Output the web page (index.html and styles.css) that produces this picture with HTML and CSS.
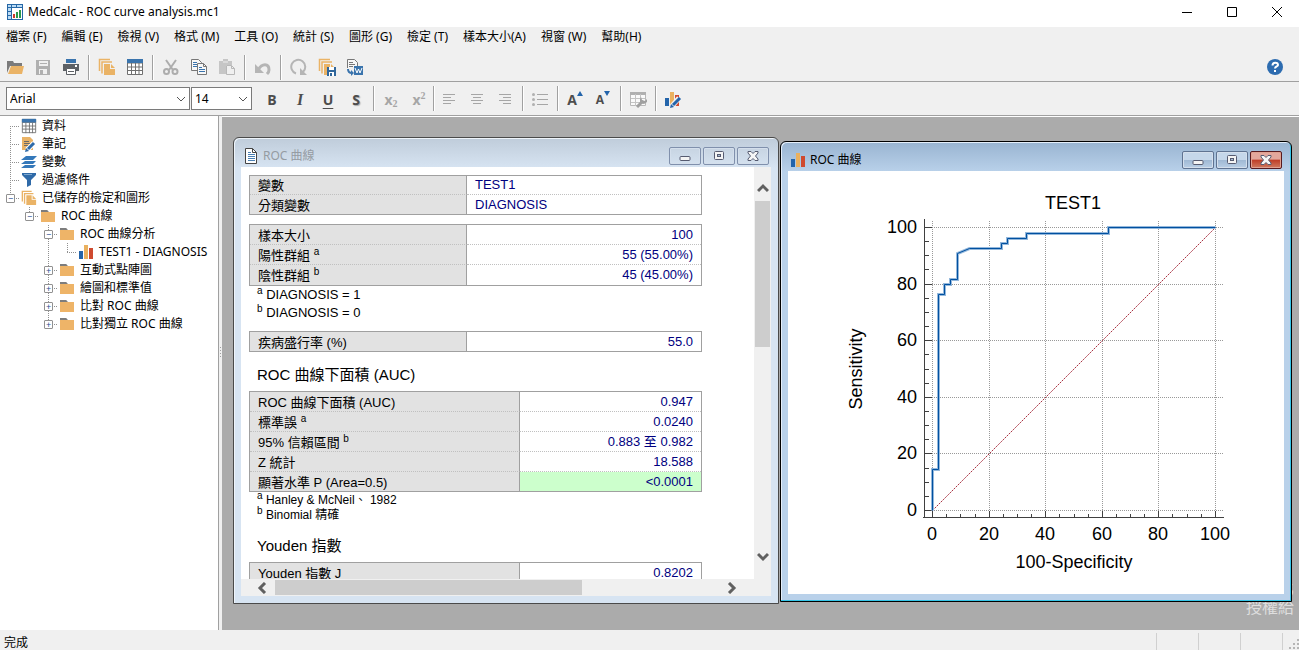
FILE: index.html
```html
<!DOCTYPE html>
<html lang="zh-Hant">

<head>
    <meta charset="UTF-8">
    <meta name="viewport" content="width=device-width, initial-scale=1.0">
    <title>MedCalc - ROC curve analysis.mc1</title>
    <link rel="stylesheet" href="styles.css">
</head>

<body>
    <!-- shared icons -->
    <svg class="symbols" aria-hidden="true">
        <symbol id="folder" viewBox="0 0 16 16">
            <path d="M1 2h6l1 2h6v2H1z" fill="#7d7d7d"/>
            <path d="M1 4h14v10H1z" fill="#eeb468"/>
            <path d="M1 2h6l2 2H1z" fill="#7d7d7d"/>
        </symbol>
        <symbol id="pages" viewBox="0 0 18 18">
            <path d="M1.5 13V1.5H12M4 15.5V4H14" fill="none" stroke="#eab366" stroke-width="1.5"/>
            <path d="M6 6h6v5h5v6H6z" fill="#eab366"/>
            <path d="M13 6l4 4h-4z" fill="#eab366"/>
        </symbol>
        <symbol id="grid" viewBox="0 0 18 18">
            <path d="M1.5 1.5h15v15h-15z" fill="#fff"/>
            <path d="M1.5 1.5h15v15h-15zM1.5 5h15M1.5 9h15M1.5 12.5h15M5.5 5v12M9.5 5v12M13 5v12" fill="none" stroke="#707070"/>
            <path d="M1 1h16v4H1z" fill="#3a74ad"/>
        </symbol>
        <symbol id="chart" viewBox="0 0 14 14">
            <path d="M0 6h4v8H0z" fill="#2364aa"/>
            <path d="M5 0h4v14H5z" fill="#eab15f"/>
            <path d="M10 3h4v11h-4z" fill="#cf4a30"/>
        </symbol>
        <symbol id="min" viewBox="0 0 12 12">
            <rect x="1" y="6.5" width="10" height="4" rx="1" fill="#f4f4f4" stroke="#565b70"/>
        </symbol>
        <symbol id="max" viewBox="0 0 12 12">
            <rect x="1.5" y="1.5" width="9" height="8" rx="1" fill="#f4f4f4" stroke="#565b70"/>
            <rect x="4.5" y="4.5" width="3" height="2" fill="#a9bdd6" stroke="#565b70"/>
        </symbol>
        <symbol id="close" viewBox="0 0 12 12">
            <path d="M1 1.5h3l2 2 2-2h3v1.5L8.500 6 11 9v1.5H8l-2-2-2 2H1V9l2.500-3L1 3z" fill="#f6f6f6" stroke="#565b70"/>
        </symbol>
    </svg>

    <header class="titlebar">
        <svg width="16" height="16" viewBox="0 0 16 16">
            <path d="M0 0h16v16H0z" fill="#2667a6"/>
            <path d="M1 1h3v2H1zM5 1h4v2H5zM10 1h5v2h-5zM1 4h3v3H1zM1 8h3v3H1zM1 12h3v3H1z" fill="#bcdcf5"/>
            <path d="M5 4h10v11H5z" fill="#fff"/>
            <path d="M6 10h2v4H6z" fill="#cf3a2b"/>
            <path d="M9 8h2v6H9z" fill="#2b9a4b"/>
            <path d="M12 6h2v8h-2z" fill="#2b9a4b"/>
        </svg>
        <h1>MedCalc - ROC curve analysis.mc1</h1>
        <div class="caption">
            <button aria-label="最小化"><svg width="12" height="12"><path d="M1 6.5h10" stroke="#000"/></svg></button>
            <button aria-label="最大化"><svg width="12" height="12"><path d="M1.5 1.5h9v9h-9z" fill="none" stroke="#000"/></svg></button>
            <button aria-label="關閉"><svg width="12" height="12"><path d="M1 1l10 10M11 1L1 11" stroke="#000"/></svg></button>
        </div>
    </header>

    <nav class="menu">
        <button>檔案 (F)</button>
        <button>編輯 (E)</button>
        <button>檢視 (V)</button>
        <button>格式 (M)</button>
        <button>工具 (O)</button>
        <button>統計 (S)</button>
        <button>圖形 (G)</button>
        <button>檢定 (T)</button>
        <button>樣本大小(A)</button>
        <button>視窗 (W)</button>
        <button>幫助(H)</button>
    </nav>

    <div class="toolbar main">
        <button aria-label="開啟">
            <svg width="18" height="18"><path d="M1 3h6l1 2h8v3H4L1 15z" fill="#7b7b7b"/><path d="M5 8h13l-2 8H2z" fill="#eab366"/></svg>
        </button>
        <button aria-label="儲存">
            <svg width="18" height="18"><path d="M2 2h14v15H2z" fill="#b0b0b0"/><path d="M5 3h9v5H5zM5 11h8v5H5z" fill="#f0f0f0"/><path d="M6 5.5h7" stroke="#b0b0b0"/><path d="M6 12h3v4H6z" fill="#b0b0b0"/></svg>
        </button>
        <button aria-label="列印">
            <svg width="18" height="18"><path d="M4 1h10v4H4z" fill="#3a74ad"/><path d="M1 6h16v7H1z" fill="#5d6166"/><path d="M4.5 10.5h9v6h-9z" fill="#fff" stroke="#5d6166"/><path d="M6 13.5h6" stroke="#5d6166"/><path d="M13 7h2v2h-2z" fill="#fff"/></svg>
        </button>
        <span class="sep"></span>
        <button aria-label="檔案"><svg width="18" height="18"><use href="#pages"/></svg></button>
        <button aria-label="資料表"><svg width="18" height="18"><use href="#grid"/></svg></button>
        <span class="sep"></span>
        <button aria-label="剪下">
            <svg width="18" height="18"><path d="M4 2l7 10M14 2L7 12" stroke="#adadad" stroke-width="2"/><circle cx="4.5" cy="13.5" r="2.5" fill="none" stroke="#adadad" stroke-width="2"/><circle cx="13" cy="13.5" r="2.5" fill="none" stroke="#adadad" stroke-width="2"/></svg>
        </button>
        <button aria-label="複製">
            <svg width="18" height="18"><path d="M1.5 1.5h7l3 3v8h-10z" fill="#f7f7f7" stroke="#777"/><path d="M3 4.5h4M3 6.5h6M3 8.5h6" stroke="#3a74ad"/><path d="M7.5 5.5h6l3 3v8h-9z" fill="#f7f7f7" stroke="#777"/><path d="M13.5 5.5v3h3" fill="none" stroke="#777"/><path d="M9 9.5h3M9 11.5h6M9 13.5h6" stroke="#3a74ad"/></svg>
        </button>
        <button aria-label="貼上">
            <svg width="18" height="18"><path d="M1 3h4V1h5v2h4v4H8v9H1z" fill="#c6c6c6"/><path d="M5 4h5" stroke="#eee"/><path d="M8.5 7.5h5l3 3v6h-8z" fill="#f0f0f0" stroke="#b8b8b8"/><path d="M13.5 7.5v3h3" fill="none" stroke="#b8b8b8"/></svg>
        </button>
        <span class="sep"></span>
        <button aria-label="復原">
            <svg width="18" height="18"><path d="M4 12c4-7 11-7 11 0 0 2-1 3-2 4" fill="none" stroke="#b5b5b5" stroke-width="3"/><path d="M1 6v9h9z" fill="#b5b5b5"/></svg>
        </button>
        <span class="sep"></span>
        <button aria-label="重算">
            <svg width="18" height="18"><path d="M6 15.5A7 7 0 1 1 13 14" fill="none" stroke="#b5b5b5" stroke-width="2"/><path d="M10 10v7h7z" fill="#b5b5b5"/></svg>
        </button>
        <button aria-label="儲存結果">
            <svg width="18" height="18"><use href="#pages"/><path d="M9 9h9v9H9z" fill="#2f669b"/><path d="M11 9h5v3h-5zM11 14h5v4h-5z" fill="#fff"/><path d="M12 15h2v3h-2z" fill="#2f669b"/></svg>
        </button>
        <button aria-label="匯出至 Word">
            <svg width="18" height="18"><path d="M1.5 10V1.5h7l3 3V8" fill="#f7f7f7" stroke="#777"/><path d="M3 4.5h4M3 6.5h6M3 8.5h4" stroke="#777"/><path d="M2 11c0 3 1 4 4 4" fill="none" stroke="#3a74ad" stroke-width="2"/><path d="M5 12l3 3-3 3z" fill="#3a74ad"/><path d="M8 8h9v9H8z" fill="#3a74ad"/><path d="M9 10l2 5 1.5-4 1.5 4 2-5" fill="none" stroke="#fff"/></svg>
        </button>
        <button class="help" aria-label="說明">
            <svg width="18" height="18"><circle cx="9" cy="9" r="8" fill="#2d6cb0"/><path d="M6.5 7.5c0-4 5.500-3.500 5.500-.5 0 1.500-3 1.500-3 3.500" fill="none" stroke="#fff" stroke-width="2"/><path d="M8 12h2v2H8z" fill="#fff"/></svg>
        </button>
    </div>

    <div class="toolbar format">
        <select class="font" aria-label="字型"><option>Arial</option></select>
        <select class="size" aria-label="字型大小"><option>14</option></select>
        <button class="letter">B</button>
        <button class="letter italic">I</button>
        <button class="letter underline">U</button>
        <button class="letter shadow">S</button>
        <span class="sep"></span>
        <button class="letter off">x<sub>2</sub></button>
        <button class="letter off">x<sup>2</sup></button>
        <span class="sep tight"></span>
        <button aria-label="靠左"><svg width="18" height="18"><path d="M3 4.5h12M3 7.5h8M3 10.5h12M3 13.5h8" stroke="#a6a6a6"/></svg></button>
        <button aria-label="置中"><svg width="18" height="18"><path d="M3 4.5h12M5 7.5h8M3 10.5h12M5 13.5h8" stroke="#a6a6a6"/></svg></button>
        <button aria-label="靠右"><svg width="18" height="18"><path d="M3 4.5h12M7 7.5h8M3 10.5h12M7 13.5h8" stroke="#a6a6a6"/></svg></button>
        <span class="sep"></span>
        <button aria-label="項目符號"><svg width="18" height="18"><path d="M6 4.5h11M6 9.5h11M6 14.5h11" stroke="#a6a6a6"/><circle cx="2.5" cy="4.5" r="1.5" fill="#b0b0b0"/><circle cx="2.5" cy="9.5" r="1.5" fill="#b0b0b0"/><circle cx="2.5" cy="14.5" r="1.5" fill="#b0b0b0"/></svg></button>
        <span class="sep"></span>
        <button class="letter" aria-label="放大字型">A<svg class="step" width="6" height="5"><path d="M3 0l3 5H0z" fill="#2364aa"/></svg></button>
        <button class="letter small" aria-label="縮小字型">A<svg class="step" width="6" height="5"><path d="M0 0h6L3 5z" fill="#2364aa"/></svg></button>
        <span class="sep"></span>
        <button aria-label="表格格式">
            <svg width="18" height="18"><path d="M1.5 2.5h15v13h-15z" fill="#fafafa" stroke="#b8b8b8"/><path d="M1 2h16v3H1z" fill="#b0b0b0"/><path d="M2 8.5h14M2 12.5h14M6.5 4v12M11.5 4v12" stroke="#c4c4c4"/><path d="M8 17l6-6" stroke="#a0a0a0" stroke-width="3"/><path d="M12 7l1 3 3 1 2-2v3l-3 2-4-1V9z" fill="#a0a0a0"/></svg>
        </button>
        <span class="sep"></span>
        <button aria-label="圖形格式">
            <svg width="18" height="18"><path d="M1 8h4v8H1z" fill="#2364aa"/><path d="M6 2h4v12H6z" fill="#eab15f"/><path d="M11 5h4v11h-4z" fill="#cf4a30"/><path d="M8 16l7-8" stroke="#f0f0f0" stroke-width="5"/><path d="M9 15l7-7" stroke="#2364aa" stroke-width="3"/><path d="M6 18l1-4 3 3z" fill="#2364aa"/></svg>
        </button>
    </div>

    <main>
        <aside>
            <ul class="tree">
                <li>
                    <div class="row"><svg width="16" height="16"><use href="#grid"/></svg>資料</div>
                </li>
                <li>
                    <div class="row"><svg width="16" height="16"><path d="M1 1h8l3 3v10H1z" fill="#eab366"/><path d="M3 5.5h5M3 7.5h6M3 9.5h5" stroke="#6a6a6a"/><path d="M6 14l7-7" stroke="#fff" stroke-width="5"/><path d="M7 13l6-6" stroke="#2f6aa8" stroke-width="3"/><path d="M4 16l1-4 3 3z" fill="#2f6aa8"/></svg>筆記</div>
                </li>
                <li>
                    <div class="row"><svg width="16" height="16"><path d="M5 2h11l-4 4H0zM4 7h11l-3 3H0zM4 11h11l-3 3H0z" fill="#3478ba"/></svg>變數</div>
                </li>
                <li>
                    <div class="row"><svg width="16" height="16"><path d="M1 1h14v2l-5 5v5l-4 2V8L1 3z" fill="#2f6aa8"/><path d="M3 2.5h8" stroke="#7fa8cf"/></svg>過濾條件</div>
                </li>
                <li>
                    <div class="row"><button class="twist" aria-label="收合">−</button><svg width="16" height="16"><use href="#pages"/></svg>已儲存的檢定和圖形</div>
                    <ul class="single">
                        <li>
                            <div class="row"><button class="twist" aria-label="收合">−</button><svg width="16" height="16"><use href="#folder"/></svg>ROC 曲線</div>
                            <ul>
                                <li>
                                    <div class="row"><button class="twist" aria-label="收合">−</button><svg width="16" height="16"><use href="#folder"/></svg>ROC 曲線分析</div>
                                    <ul class="single">
                                        <li>
                                            <div class="row"><svg width="16" height="14"><use href="#chart"/></svg>TEST1 - DIAGNOSIS</div>
                                        </li>
                                    </ul>
                                </li>
                                <li>
                                    <div class="row"><button class="twist" aria-label="展開">+</button><svg width="16" height="16"><use href="#folder"/></svg>互動式點陣圖</div>
                                </li>
                                <li>
                                    <div class="row"><button class="twist" aria-label="展開">+</button><svg width="16" height="16"><use href="#folder"/></svg>繪圖和標準值</div>
                                </li>
                                <li>
                                    <div class="row"><button class="twist" aria-label="展開">+</button><svg width="16" height="16"><use href="#folder"/></svg>比對 ROC 曲線</div>
                                </li>
                                <li>
                                    <div class="row"><button class="twist" aria-label="展開">+</button><svg width="16" height="16"><use href="#folder"/></svg>比對獨立 ROC 曲線</div>
                                </li>
                            </ul>
                        </li>
                    </ul>
                </li>
            </ul>
        </aside>
        <div class="splitter"></div>

        <div class="desktop">
            <p class="licence">5<br>授權給</p>

            <section class="window report">
                <div class="bar">
                    <svg width="14" height="16"><path d="M1.5 .5h7l4 4v11h-11z" fill="#fff" stroke="#444"/><path d="M8.500 .5v4h4" fill="none" stroke="#444"/><path d="M4 4.5h3M4 6.5h7M4 8.500h7M4 10.5h7M4 12.5h7" stroke="#4a80b5"/></svg>
                    <h2>ROC 曲線</h2>
                    <button aria-label="最小化"><svg width="12" height="12"><use href="#min"/></svg></button>
                    <button aria-label="最大化"><svg width="12" height="12"><use href="#max"/></svg></button>
                    <button aria-label="關閉"><svg width="12" height="12"><use href="#close"/></svg></button>
                </div>
                <div class="pane">
                    <article>
                        <table>
                            <tr><th>變數</th><td class="left">TEST1</td></tr>
                            <tr><th>分類變數</th><td class="left">DIAGNOSIS</td></tr>
                        </table>
                        <table class="roomy gap">
                            <tr><th>樣本大小</th><td>100</td></tr>
                            <tr><th>陽性群組 <sup>a</sup></th><td>55 (55.00%)</td></tr>
                            <tr><th>陰性群組 <sup>b</sup></th><td>45 (45.00%)</td></tr>
                        </table>
                        <p><sup>a</sup> DIAGNOSIS = 1<br><sup>b</sup> DIAGNOSIS = 0</p>
                        <table class="gap">
                            <tr><th>疾病盛行率 (%)</th><td>55.0</td></tr>
                        </table>
                        <h3>ROC 曲線下面積 (AUC)</h3>
                        <table class="roomy wide">
                            <tr><th>ROC 曲線下面積 (AUC)</th><td>0.947</td></tr>
                            <tr><th>標準誤 <sup>a</sup></th><td>0.0240</td></tr>
                            <tr><th>95% 信賴區間 <sup>b</sup></th><td>0.883 至 0.982</td></tr>
                            <tr><th>Z 統計</th><td>18.588</td></tr>
                            <tr><th>顯著水準 P (Area=0.5)</th><td class="green">&lt;0.0001</td></tr>
                        </table>
                        <p class="fine"><sup>a</sup> Hanley &amp; McNeil、 1982<br><sup>b</sup> Binomial 精確</p>
                        <h3>Youden 指數</h3>
                        <table class="roomy wide">
                            <tr><th>Youden 指數 J</th><td>0.8202</td></tr>
                        </table>
                    </article>
                    <div class="scroll vertical">
                        <button aria-label="向上"><svg width="12" height="10"><path d="M1 8l5-5 5 5" fill="none" stroke="#606060" stroke-width="3"/></svg></button>
                        <div class="thumb"></div>
                        <button class="end" aria-label="向下"><svg width="12" height="10"><path d="M1 2l5 5 5-5" fill="none" stroke="#606060" stroke-width="3"/></svg></button>
                    </div>
                    <div class="scroll horizontal">
                        <button aria-label="向左"><svg width="10" height="12"><path d="M8 1L3 6l5 5" fill="none" stroke="#606060" stroke-width="3"/></svg></button>
                        <div class="thumb"></div>
                        <button class="end" aria-label="向右"><svg width="10" height="12"><path d="M2 1l5 5-5 5" fill="none" stroke="#606060" stroke-width="3"/></svg></button>
                    </div>
                </div>
            </section>

            <section class="window graph">
                <div class="bar">
                    <svg width="14" height="14"><use href="#chart"/></svg>
                    <h2>ROC 曲線</h2>
                    <button aria-label="最小化"><svg width="12" height="12"><use href="#min"/></svg></button>
                    <button aria-label="最大化"><svg width="12" height="12"><use href="#max"/></svg></button>
                    <button class="red" aria-label="關閉"><svg width="12" height="12"><use href="#close"/></svg></button>
                </div>
                <svg class="plot" viewBox="0 0 496 423">
                    <path class="grid" d="M144 56.5h291M144 113.5h291M144 169.5h291M144 226.5h291M144 282.5h291M144 339.5h291"/>
                    <path class="grid" d="M144.5 50v290M201.5 50v290M257.5 50v290M314.5 50v290M370.5 50v290M427.5 50v290"/>
                    <!-- axes, then major and minor ticks -->
                    <path class="axis" d="M136.5 48v299M135 346.5h301"/>
                    <path class="axis" d="M137 56.5h7M137 113.5h7M137 169.5h7M137 226.5h7M137 282.5h7M137 339.5h7M144.5 340v6M201.5 340v6M257.5 340v6M314.5 340v6M370.5 340v6M427.5 340v6"/>
                    <path class="axis" d="M137 70.5h4M137 84.5h4M137 98.5h4M137 127.5h4M137 141.5h4M137 155.5h4M137 183.5h4M137 198.5h4M137 212.5h4M137 240.5h4M137 254.5h4M137 268.5h4M137 297.5h4M137 311.5h4M137 325.5h4"/>
                    <path class="axis" d="M158.5 343v3M172.5 343v3M187.5 343v3M215.5 343v3M229.5 343v3M243.5 343v3M271.5 343v3M286.5 343v3M300.5 343v3M328.5 343v3M342.5 343v3M356.5 343v3M384.5 343v3M399.5 343v3M413.5 343v3"/>
                    <path class="diagonal" d="M144.5 339.5L427.5 56.5"/>
                    <path class="halo" d="M144.5 339.5V298.5H150.5V123.5H156.5V113.5H162.5V108.5H169.5V82.5L181.5 77.5H213.5V72.5H219.5V67.5H238.5V62.5H320.5V56.5H427.5"/>
                    <path class="curve" d="M144.5 339.5V298.5H150.5V123.5H156.5V113.5H162.5V108.5H169.5V82.5L181.5 77.5H213.5V72.5H219.5V67.5H238.5V62.5H320.5V56.5H427.5"/>
                    <g class="mid">
                        <text x="285" y="38">TEST1</text>
                        <text x="144" y="369">0</text>
                        <text x="201" y="369">20</text>
                        <text x="257" y="369">40</text>
                        <text x="314" y="369">60</text>
                        <text x="370" y="369">80</text>
                        <text x="427" y="369">100</text>
                        <text x="286" y="397">100-Specificity</text>
                        <text transform="translate(74 198) rotate(-90)">Sensitivity</text>
                    </g>
                    <g class="right">
                        <text x="129" y="62">100</text>
                        <text x="129" y="119">80</text>
                        <text x="129" y="175">60</text>
                        <text x="129" y="232">40</text>
                        <text x="129" y="288">20</text>
                        <text x="129" y="345">0</text>
                    </g>
                </svg>
            </section>
        </div>
    </main>

    <footer>
        <span class="message">完成</span>
        <span class="cell first"></span>
        <span class="cell"></span>
        <span class="cell"></span>
        <span class="cell grip"><svg width="12" height="12"><path d="M9 1h2v2H9zM5 5h2v2H5zM9 5h2v2H9zM1 9h2v2H1zM5 9h2v2H5zM9 9h2v2H9z" fill="#b5b5b5"/></svg></span>
    </footer>
</body>

</html>
```
FILE: styles.css
```css
* {
    box-sizing: border-box;
}

body {
    margin: 0;
    height: 100vh;
    display: flex;
    flex-direction: column;
    overflow: hidden;
    background-color: #f0f0f0;
    color: black;
    font-family: "Noto Sans", "Noto Sans CJK TC", sans-serif;
    font-size: 12px;
}

h1, h2, h3, p, ul {
    margin: 0;
    padding: 0;
    font-weight: normal;
}

button {
    border: 0;
    padding: 0;
    background: none;
    color: inherit;
    font: inherit;
}

svg {
    display: block;
    flex: none;
}

.symbols {
    position: absolute;
    width: 0;
    height: 0;
}

.titlebar {
    display: flex;
    align-items: center;
    height: 27px;
    padding: 0 0 4px 7px;
    background-color: white;
}

.titlebar h1 {
    margin-left: 5px;
    font-size: 12px;
}

.caption {
    display: flex;
    margin-left: auto;
}

.caption button {
    width: 45px;
    display: flex;
    justify-content: center;
}

.menu {
    display: flex;
    gap: 1px;
    height: 20px;
}

.menu button {
    padding: 0 7px;
    line-height: 20px;
    white-space: nowrap;
}

.menu button:first-child {
    padding-left: 6px;
}

.toolbar {
    display: flex;
    align-items: center;
    border-bottom: 1px solid #a0a0a0;
}

.toolbar button {
    width: 28px;
    height: 28px;
    flex: none;
    display: flex;
    align-items: center;
    justify-content: center;
}

.toolbar.main {
    height: 35px;
    padding: 6px 0 0 1px;
}

.toolbar.format {
    height: 34px;
    padding-left: 6px;
}

.toolbar .help {
    margin: 0 10px 0 auto;
}

.sep {
    width: 2px;
    height: 25px;
    margin: 0 3px;
    flex: none;
    border-left: 1px solid #a0a0a0;
    border-right: 1px solid white;
}

.format .sep {
    margin: 0 2px 0 3px;
}

.format .sep.tight {
    margin: 0;
}

select {
    height: 23px;
    padding: 0 3px;
    border: 1px solid #7a7a7a;
    border-radius: 0;
    appearance: none;
    background: white url("data:image/svg+xml,%3Csvg xmlns='http://www.w3.org/2000/svg' width='10' height='6'%3E%3Cpath d='M1 1l4 4 4-4' fill='none' stroke='%23555'/%3E%3C/svg%3E") no-repeat right 3px center;
    color: black;
    font-family: inherit;
    font-size: 12px;
}

.font {
    width: 184px;
    margin-right: 1px;
}

.size {
    width: 61px;
    margin-right: 6px;
}

.toolbar .letter {
    padding-top: 2px;
    color: #4d4d4d;
    font-family: "Open Sans", sans-serif;
    font-weight: bold;
    font-size: 14px;
    line-height: 16px;
}

.toolbar .italic {
    font-family: "Liberation Serif", serif;
    font-style: italic;
    font-size: 16px;
}

.toolbar .underline {
    text-decoration: underline;
    text-underline-offset: 3px;
}

.shadow {
    text-shadow: 1px 1px 1px #aaa;
}

.toolbar .small {
    font-size: 12px;
}

.toolbar .off {
    color: #a6a6a6;
}

.off sub, .off sup {
    font-family: "Liberation Serif", serif;
    font-size: 10px;
    line-height: 10px;
}

.off sub {
    align-self: flex-end;
    padding-bottom: 4px;
}

.off sup, .step {
    align-self: flex-start;
    margin-top: 4px;
}

main {
    flex: 1;
    min-height: 0;
    display: flex;
}

aside {
    width: 219px;
    flex: none;
    padding-top: 1px;
    border-right: 1px solid #a0a0a0;
    background-color: white;
}

.splitter {
    width: 3px;
    flex: none;
    background: repeating-linear-gradient(#a0a0a0 0 1px, transparent 1px 3px) 1px 46% / 1px 12px no-repeat;
}

/* the dotted lines of the tree are backgrounds of the lists and rows */
.tree, .tree ul {
    list-style: none;
    background: repeating-linear-gradient(#909090 0 1px, transparent 1px 2px) 10px 0 / 1px calc(100% - 9px) no-repeat;
}

.tree {
    background-position: 10px 9px;
    background-size: 1px 72px;
}

.tree ul {
    margin-left: 19px;
}

.tree ul.single {
    background-size: 1px 9px;
}

.row {
    display: flex;
    align-items: center;
    height: 18px;
    padding-left: 6px;
    line-height: 16px;
    white-space: nowrap;
    background: repeating-linear-gradient(90deg, #909090 0 1px, transparent 1px 2px) 10px 9px / 10px 1px no-repeat;
}

.row svg {
    margin: 0 5px 0 15px;
}

.twist {
    width: 9px;
    height: 9px;
    border: 1px solid #919191;
    border-radius: 1px;
    background-color: white;
    color: #2b4b8f;
    font-size: 9px;
    line-height: 7px;
}

.twist + svg {
    margin-left: 6px;
}

.desktop {
    position: relative;
    flex: 1;
    overflow: hidden;
    display: flex;
    align-items: flex-end;
    justify-content: flex-end;
    padding: 0 5px 14px;
    border-top: 1px solid white;
    background-color: #ababab;
}

.licence {
    color: #dedede;
    font-size: 16px;
    line-height: 17px;
    text-align: right;
}

.window {
    position: absolute;
    display: flex;
    flex-direction: column;
    padding: 0 7px 7px;
    border: 1px solid #4a4a4a;
    border-radius: 6px 6px 0 0;
}

.report {
    left: 11px;
    top: 20px;
    width: 546px;
    height: 467px;
    background: linear-gradient(#bfccda, #d7e4f2 30px);
    box-shadow: inset 1px 1px #eef4fa;
}

.graph {
    left: 558px;
    top: 24px;
    width: 512px;
    height: 461px;
    border-color: black;
    background: linear-gradient(#99b4d1, #b9d1ea 30px);
    box-shadow: inset -1px -1px #35c5e8, inset 1px 1px #e4eefa;
}

.bar {
    display: flex;
    align-items: center;
    gap: 2px;
    height: 29px;
    flex: none;
    padding: 6px 2px 0 3px;
}

.bar h2 {
    margin: 0 auto 0 3px;
    font-size: 12px;
    line-height: 16px;
}

.report h2 {
    color: #959ba2;
}

.bar button {
    width: 32px;
    height: 18px;
    display: flex;
    align-items: center;
    justify-content: center;
    border: 1px solid #8090ac;
    border-radius: 2px;
    box-shadow: inset 0 0 0 1px #d4dfec;
}

.graph .bar button {
    border-color: #5f7391;
    background: linear-gradient(#c5d7ea 50%, #9fb8d3 50%, #b9cfe6);
}

.graph .bar .red {
    border-color: #571a1f;
    background: linear-gradient(#e3a79c 45%, #bf3d26 50%, #d07a60);
    box-shadow: inset 0 0 0 1px #e0a090;
}

.pane {
    flex: 1;
    min-height: 0;
    display: grid;
    grid-template-columns: 1fr 17px;
    grid-template-rows: 1fr 17px;
    background-color: #f0f0f0;
}

article {
    min-height: 0;
    overflow: hidden;
    padding: 8px 52px 0 8px;
    background-color: white;
    font-family: "Liberation Sans", "Noto Sans CJK TC", sans-serif;
    font-size: 13px;
}

table {
    width: 100%;
    table-layout: fixed;
    border: 1px solid #a0a0a0;
    border-spacing: 0;
}

.gap {
    margin-top: 9px;
}

th, td {
    height: 19px;
    padding: 0 8px;
    border-bottom: 1px dotted #c0c0c0;
    line-height: 16px;
    white-space: nowrap;
}

.roomy th, .roomy td {
    height: 20px;
}

th {
    width: 217px;
    padding-top: 2px;
    border-right: 1px solid #a0a0a0;
    background-color: #e2e2e2;
    font-weight: normal;
    text-align: left;
}

.wide th {
    width: 270px;
}

td {
    color: #000080;
    text-align: right;
}

td.left {
    text-align: left;
}

td.green {
    background-color: #ccffcc;
}

tr:last-child th, tr:last-child td {
    border-bottom: 0;
}

.wide tr:nth-child(5) th, .wide tr:nth-child(5) td {
    height: 19px;
}

article sup {
    font-size: 10px;
    line-height: 0;
}

article p {
    padding-left: 8px;
    line-height: 18px;
}

article .fine {
    padding-top: 1px;
    font-size: 12px;
    line-height: 15px;
}

h3 {
    margin: 13px 0 6px 8px;
    font-size: 15px;
    line-height: 20px;
}

.scroll {
    display: flex;
}

.scroll button {
    display: flex;
    align-items: center;
    justify-content: center;
}

.thumb {
    background-color: #cdcdcd;
}

.vertical {
    flex-direction: column;
}

.vertical button {
    height: 34px;
    padding-top: 8px;
}

.vertical .end {
    margin-top: auto;
    padding: 0 0 10px;
}

.vertical .thumb {
    height: 146px;
    margin: 0 1px;
}

.horizontal button {
    width: 34px;
    padding-left: 8px;
}

.horizontal .end {
    margin-left: auto;
    padding: 0 10px 0 0;
}

.horizontal .thumb {
    width: 307px;
    margin: 1px 0;
}

.plot {
    flex: 1;
    width: 100%;
    min-height: 0;
    background-color: white;
    font-family: "Liberation Sans", sans-serif;
    font-size: 18px;
}

.plot path {
    fill: none;
}

.grid {
    stroke: #999;
    stroke-dasharray: 1 1;
}

.axis {
    stroke: #404040;
}

.diagonal {
    stroke: #a83040;
    stroke-dasharray: 2 1;
}

.halo {
    stroke: #94b8dc;
    stroke-width: 3px;
}

.curve {
    stroke: #0050a0;
}

.mid {
    text-anchor: middle;
}

.right {
    text-anchor: end;
}

footer {
    display: flex;
    height: 20px;
    flex: none;
    padding-top: 3px;
}

.message {
    padding-left: 4px;
    line-height: 20px;
}

.cell {
    width: 42px;
    border-left: 1px solid #d0d0d0;
}

.cell.first {
    margin-left: auto;
}

.cell.grip {
    width: 17px;
    padding: 5px 0 0 5px;
}
```
